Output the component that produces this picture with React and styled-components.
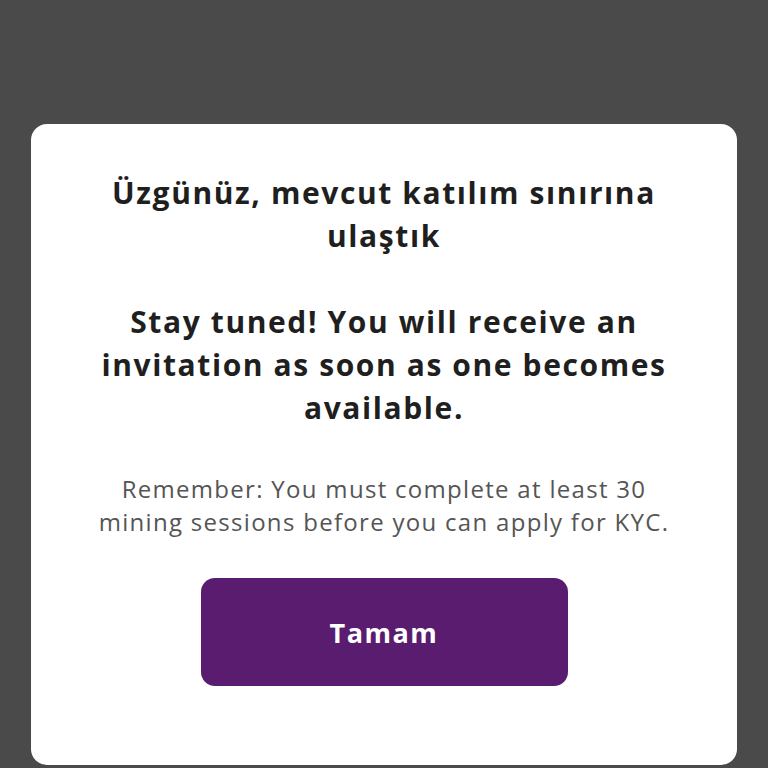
import React from 'react';
import styled, { createGlobalStyle } from 'styled-components';

const GlobalStyle = createGlobalStyle`
    html, body {
        margin: 0;
        padding: 0;
        background: #4a4a4a;
        font-family: "Open Sans", "Noto Sans", sans-serif;
    }
`

const Screen = styled.div`
    width: 768px;
    height: 768px;
    overflow: hidden;
    padding-top: 124px;
    box-sizing: border-box;
`

const Card = styled.div`
    margin-left: 31px;
    width: 706px;
    height: 641px;
    background: #ffffff;
    border-radius: 16px;
    box-sizing: border-box;
    padding: 47px 56px 0;
    display: flex;
    flex-direction: column;
    align-items: center;
`

const Title = styled.h2`
    margin: 0;
    font-size: 30px;
    font-weight: 700;
    line-height: 43px;
    letter-spacing: 1.6px;
    color: #1f1f1f;
    text-align: center;
    white-space: pre-line;
`

const Note = styled.p`
    margin: 43px 0 0;
    font-size: 24px;
    font-weight: 400;
    line-height: 33px;
    letter-spacing: 1.3px;
    color: #555555;
    text-align: center;
`

const OkButton = styled.button`
    margin-top: 40px;
    width: 367px;
    height: 108px;
    border: none;
    border-radius: 14px;
    background: #5a1c6e;
    color: #ffffff;
    font-family: inherit;
    font-size: 27px;
    font-weight: 700;
    letter-spacing: 1.5px;
    cursor: pointer;
`

export default function App() {
    return (
        <Screen>
            <GlobalStyle />
            <Card>
                <Title>
                    {'Üzgünüz, mevcut katılım sınırına ulaştık\n\nStay tuned! You will receive an invitation as soon as one becomes available.'}
                </Title>
                <Note>
                    Remember: You must complete at least 30 mining sessions before you can apply for KYC.
                </Note>
                <OkButton>Tamam</OkButton>
            </Card>
        </Screen>
    );
}
